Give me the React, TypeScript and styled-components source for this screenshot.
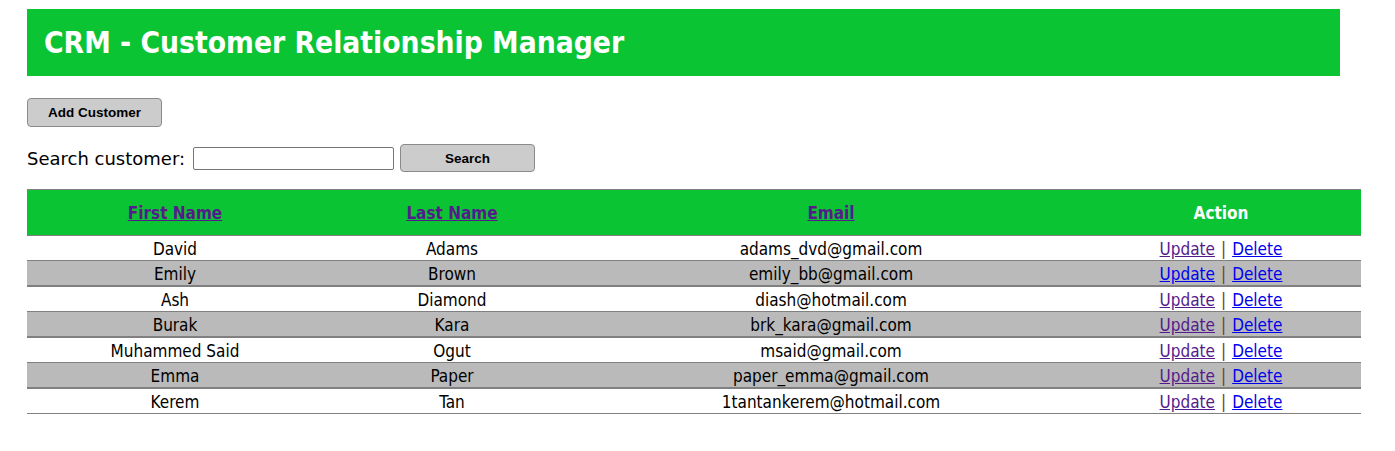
import React from "react";
import styled, { createGlobalStyle } from "styled-components";

const Global = createGlobalStyle`
  html, body { margin: 0; padding: 0; background: #fff; }
  body { font-family: Tahoma, "DejaVu Sans", Verdana, sans-serif; font-stretch: condensed; color: #000; }
`;

const Page = styled.div`
  padding: 9px 0 0 27px;
`;

const HeaderBar = styled.header`
  width: 1313px;
  height: 67px;
  background: #0bc434;
  display: flex;
  align-items: center;
  padding-left: 17px;
  box-sizing: border-box;
`;

const Title = styled.h1`
  margin: 0;
  color: #fff;
  font-size: 29.7px;
  font-weight: bold;
`;

const Controls = styled.div`
  display: flex;
  flex-direction: column;
  gap: 17px;
  margin-top: 22px;
`;

const Button = styled.button<{ $h: number }>`
  width: 135px;
  height: ${(p) => p.$h}px;
  background: #cccccc;
  border: 1px solid #8a8a8a;
  border-radius: 4px;
  font-family: "Liberation Sans", Arial, sans-serif;
  font-weight: bold;
  font-size: 13.5px;
  color: #000;
  padding: 0;
`;

const SearchRow = styled.form`
  display: flex;
  align-items: center;
`;

const Label = styled.label`
  margin-right: 8px;
  font-size: 18px;
  font-stretch: normal;
`;

const Input = styled.input`
  width: 201px;
  height: 23px;
  box-sizing: border-box;
  border: 1px solid #767676;
  border-radius: 2px;
  margin-right: 6px;
`;

const Table = styled.table`
  margin-top: 17px;
  width: 1334px;
  border-collapse: collapse;
  font-size: 17px;
  table-layout: fixed;
`;

const HeadRow = styled.tr`
  background: #0bc434;
  border-top: 1px solid #808080;
  border-bottom: 1px solid #808080;
`;

const Th = styled.th<{ $w: number }>`
  width: ${(p) => p.$w}px;
  height: 45px;
  padding: 0;
  color: #fff;
  font-weight: bold;
  text-align: center;
`;

const HeadLink = styled.a`
  color: #551a8b;
`;

const Row = styled.tr<{ $alt: boolean }>`
  background: ${(p) => (p.$alt ? "#bababa" : "#fff")};
  border-bottom: ${(p) => (p.$alt ? 2 : 1)}px solid #808080;
`;

const Td = styled.td`
  height: 23px;
  padding: 1px 0 0;
  text-align: center;
`;

const ActLink = styled.a<{ $visited?: boolean }>`
  color: ${(p) => (p.$visited ? "#551a8b" : "#0000ee")};
`;

const Sep = styled.span`
  color: #7a3e0c;
  margin: 0 6px;
`;

const data = [
  ["David", "Adams", "adams_dvd@gmail.com"],
  ["Emily", "Brown", "emily_bb@gmail.com"],
  ["Ash", "Diamond", "diash@hotmail.com"],
  ["Burak", "Kara", "brk_kara@gmail.com"],
  ["Muhammed Said", "Ogut", "msaid@gmail.com"],
  ["Emma", "Paper", "paper_emma@gmail.com"],
  ["Kerem", "Tan", "1tantankerem@hotmail.com"],
];

export default function App() {
  return (
    <>
      <Global />
      <Page>
        <HeaderBar>
          <Title>CRM - Customer Relationship Manager</Title>
        </HeaderBar>
        <Controls>
          <div>
            <Button $h={29}>Add Customer</Button>
          </div>
          <SearchRow onSubmit={(e) => e.preventDefault()}>
            <Label>Search customer:</Label>
            <Input type="text" />
            <Button $h={28}>Search</Button>
          </SearchRow>
        </Controls>
        <Table>
          <thead>
            <HeadRow>
              <Th $w={296}><HeadLink href="#">First Name</HeadLink></Th>
              <Th $w={258}><HeadLink href="#">Last Name</HeadLink></Th>
              <Th $w={500}><HeadLink href="#">Email</HeadLink></Th>
              <Th $w={280}>Action</Th>
            </HeadRow>
          </thead>
          <tbody>
            {data.map((r, i) => (
              <Row key={i} $alt={i % 2 === 1}>
                <Td>{r[0]}</Td>
                <Td>{r[1]}</Td>
                <Td>{r[2]}</Td>
                <Td>
                  <ActLink href="#" $visited={i !== 1}>Update</ActLink>
                  <Sep>|</Sep>
                  <ActLink href="#">Delete</ActLink>
                </Td>
              </Row>
            ))}
          </tbody>
        </Table>
      </Page>
    </>
  );
}
